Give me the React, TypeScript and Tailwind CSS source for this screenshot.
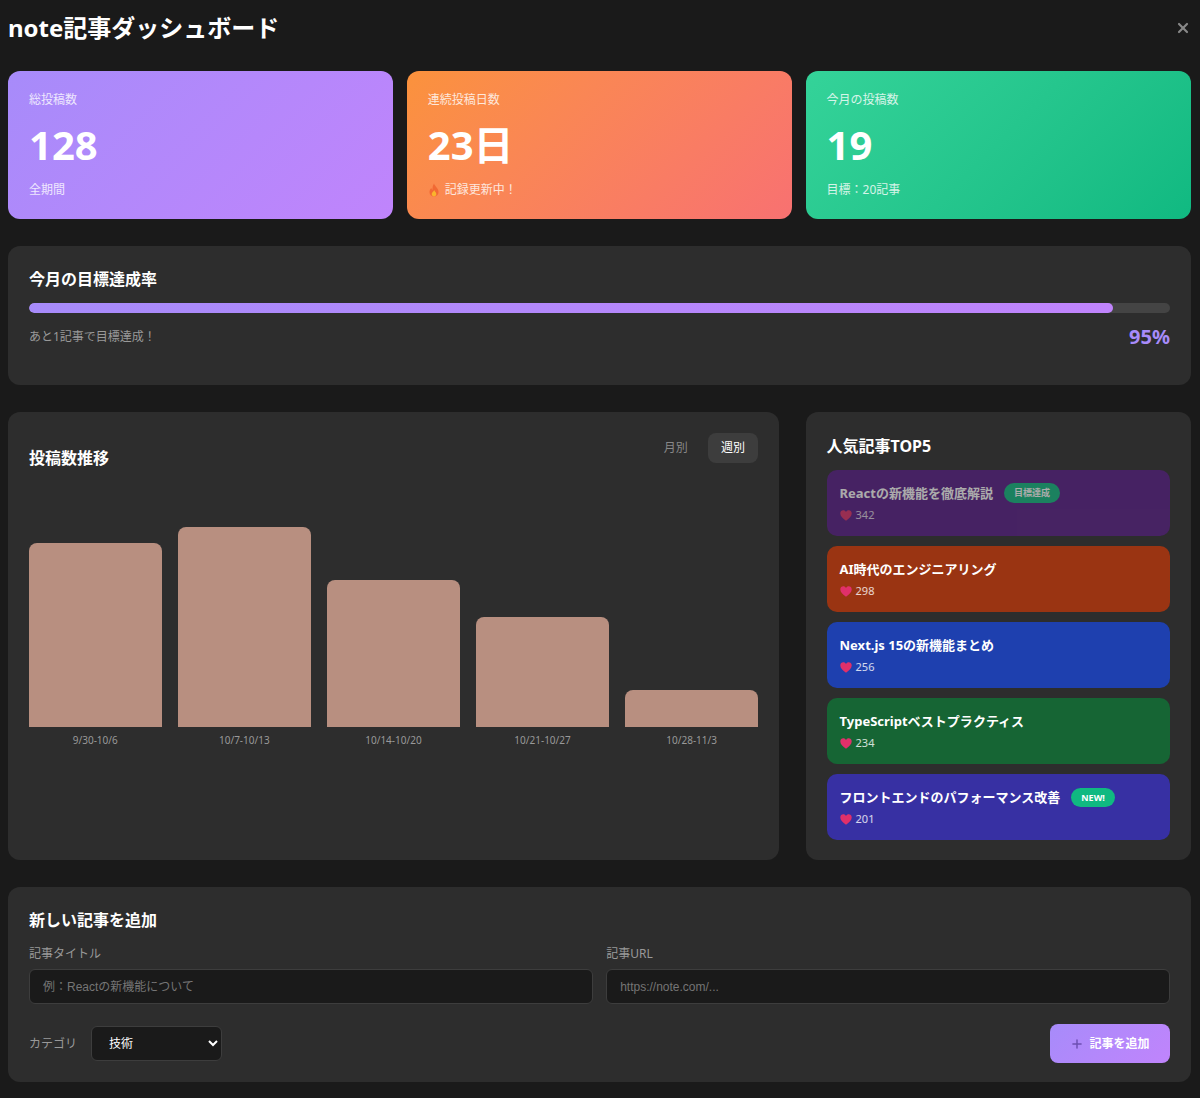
import React from "react";
import { X, Plus } from "lucide-react";

const Flame = () => (
  <svg width="12" height="14" viewBox="0 0 12 14" className="shrink-0">
    <path d="M6 0.5C6.5 3 10.5 5 10.5 9C10.5 11.8 8.5 13.5 6 13.5C3.5 13.5 1.5 11.8 1.5 9C1.5 7 2.6 5.8 3.3 5C3.5 6 4 6.6 4.6 6.8C4.4 4.5 4.8 2.2 6 0.5Z" fill="#f0622e" />
    <path d="M6.2 7C6.5 8.5 8.3 9.3 8.3 11C8.3 12.5 7.2 13.5 6 13.5C4.8 13.5 3.7 12.5 3.7 11C3.7 9.5 5.5 8.8 6.2 7Z" fill="#fbbf24" />
  </svg>
);

const Heart = () => (
  <svg width="12" height="11" viewBox="0 0 12 11" className="shrink-0">
    <path d="M6 10.8C2.8 8.4 0.3 6.3 0.3 3.5C0.3 1.5 1.7 0.3 3.3 0.3C4.4 0.3 5.4 0.9 6 2C6.6 0.9 7.6 0.3 8.7 0.3C10.3 0.3 11.7 1.5 11.7 3.5C11.7 6.3 9.2 8.4 6 10.8Z" fill="#e0306a" />
  </svg>
);

const bars = [
  { label: "9/30-10/6", h: "h-[184px]" },
  { label: "10/7-10/13", h: "h-[200px]" },
  { label: "10/14-10/20", h: "h-[147px]" },
  { label: "10/21-10/27", h: "h-[110px]" },
  { label: "10/28-11/3", h: "h-[37px]" },
];

const Stat = ({ cls, label, value, sub }: { cls: string; label: string; value: string; sub: React.ReactNode }) => (
  <div className={`rounded-xl p-[21px] text-white ${cls}`}>
    <div className="text-xs leading-4 opacity-80">{label}</div>
    <div className="my-[7px] text-[40px] font-bold leading-normal">{value}</div>
    <div className="flex items-center text-xs leading-4 opacity-80">{sub}</div>
  </div>
);

const Item = ({
  cls,
  title,
  likes,
  badge,
}: {
  cls: string;
  title: string;
  likes: number;
  badge?: React.ReactNode;
}) => (
  <div className={`rounded-[10px] px-[13px] py-[13px] ${cls}`}>
    <div className="flex items-center gap-[11px] text-[13px] font-bold leading-5 text-white">
      <span>{title}</span>
      {badge}
    </div>
    <div className="mt-[4px] flex items-center gap-[4px] text-[11px] leading-4 text-white/80">
      <Heart />
      <span>{likes}</span>
    </div>
  </div>
);

export default function App() {
  return (
    <div
      className="min-h-screen bg-[#1a1a1a] pl-2 pr-[9px] pt-[10px] text-white"
      style={{ fontFamily: '"Noto Sans", "Noto Sans CJK JP", sans-serif' }}
    >
      <div className="mb-[25px] flex h-9 items-center justify-between">
        <h1 className="text-2xl font-bold leading-9">note記事ダッシュボード</h1>
        <X size={16} strokeWidth={3.2} className="mr-0 text-[#888]" />
      </div>

      <div className="grid grid-cols-3 gap-[13.33px]">
        <Stat cls="bg-linear-135 from-[#a78bfa] to-[#c084fc]" label="総投稿数" value="128" sub="全期間" />
        <Stat
          cls="bg-linear-135 from-[#fb923c] to-[#f87171]"
          label="連続投稿日数"
          value="23日"
          sub={
            <span className="flex items-center gap-[5px]">
              <Flame />
              記録更新中！
            </span>
          }
        />
        <Stat cls="bg-linear-135 from-[#34d399] to-[#10b981]" label="今月の投稿数" value="19" sub="目標：20記事" />
      </div>

      <section className="mt-[27px] h-[139px] rounded-xl bg-[#2d2d2d] px-[21px] pt-[21px]">
        <h2 className="text-base font-bold leading-6">今月の目標達成率</h2>
        <div className="mt-[12px] h-[10px] overflow-hidden rounded-full bg-[#444]">
          <div className="h-full w-[95%] rounded-full bg-linear-to-r from-[#a78bfa] to-[#c084fc]" />
        </div>
        <div className="mt-[8px] flex items-start justify-between">
          <span className="mt-[8px] text-xs leading-4 text-[#999]">あと1記事で目標達成！</span>
          <span className="text-xl font-bold leading-8 text-[#a78bfa]">95%</span>
        </div>
      </section>

      <div className="mt-[27px] grid grid-cols-[2fr_1fr] gap-[26.67px]">
        <section className="rounded-xl bg-[#2d2d2d] px-[21px] pt-[21px]">
          <div className="flex items-start justify-between">
            <h2 className="mt-[13px] text-base font-bold leading-6">投稿数推移</h2>
            <div className="flex items-center gap-[7px] text-xs">
              <span className="px-[13px] leading-[30px] text-[#888]">月別</span>
              <span className="rounded-lg bg-[#3d3d3d] px-[13px] leading-[30px] text-white">週別</span>
            </div>
          </div>
          <div className="mt-[57px] grid h-[200px] grid-cols-5 items-end gap-[16.6px]">
            {bars.map((b) => (
              <div key={b.label} className={`rounded-t-lg bg-[#b88f80] ${b.h}`} />
            ))}
          </div>
          <div className="mt-[6px] grid grid-cols-5 gap-[16.6px]">
            {bars.map((b) => (
              <div key={b.label} className="text-center text-[10px] leading-[14px] text-[#999]">
                {b.label}
              </div>
            ))}
          </div>
        </section>

        <section className="rounded-xl bg-[#2d2d2d] px-[21px] pb-[20px] pt-[22px]">
          <h2 className="text-base font-bold leading-6">人気記事TOP5</h2>
          <div className="mt-[12px] flex flex-col gap-[10px]">
            <Item
              cls="bg-[#581c87] opacity-60"
              title="Reactの新機能を徹底解説"
              likes={342}
              badge={
                <span className="rounded-full bg-[#10b981] px-[10px] text-[9px] font-bold leading-5 text-white">目標達成</span>
              }
            />
            <Item cls="bg-[#9a3412]" title="AI時代のエンジニアリング" likes={298} />
            <Item cls="bg-[#1e40af]" title="Next.js 15の新機能まとめ" likes={256} />
            <Item cls="bg-[#166534]" title="TypeScriptベストプラクティス" likes={234} />
            <Item
              cls="bg-[#3730a3]"
              title="フロントエンドのパフォーマンス改善"
              likes={201}
              badge={
                <span className="rounded-full bg-[#10b981] px-[10px] text-[9px] font-bold leading-[19px] text-white">NEW!</span>
              }
            />
          </div>
        </section>
      </div>

      <section className="mt-[27px] h-[195px] rounded-xl bg-[#2d2d2d] px-[21px] pt-[21px]">
        <h2 className="text-base font-bold leading-6">新しい記事を追加</h2>
        <div className="mt-[14px] grid grid-cols-2 gap-[13.33px]">
          <label className="block">
            <span className="block text-xs leading-4 text-[#999]">記事タイトル</span>
            <input
              placeholder="例：Reactの新機能について"
              className="mt-[7px] block h-[35px] w-full rounded-md border border-[#3d3d3d] bg-[#1a1a1a] px-[13px] text-xs text-white outline-none placeholder:text-[#757575]"
              style={{ fontFamily: '"Liberation Sans", "Noto Sans CJK JP", sans-serif' }}
            />
          </label>
          <label className="block">
            <span className="block text-xs leading-4 text-[#999]">記事URL</span>
            <input
              placeholder="https://note.com/..."
              className="mt-[7px] block h-[35px] w-full rounded-md border border-[#3d3d3d] bg-[#1a1a1a] px-[13px] text-xs text-white outline-none placeholder:text-[#757575]"
              style={{ fontFamily: '"Liberation Sans", "Noto Sans CJK JP", sans-serif' }}
            />
          </label>
        </div>
        <div className="mt-[20px] flex items-center justify-between">
          <div className="flex items-center gap-[14px]">
            <span className="text-xs text-[#999]">カテゴリ</span>
            <select
              defaultValue="技術"
              className="h-[35px] w-[131px] rounded-md border border-[#3d3d3d] bg-[#1a1a1a] pl-[13px] pr-[4px] text-xs text-white outline-none"
            >
              <option>技術</option>
            </select>
          </div>
          <button className="flex h-[39px] w-[120px] items-center justify-center gap-[5px] rounded-lg bg-linear-135 from-[#a78bfa] to-[#c084fc] text-xs font-bold text-white">
            <Plus size={14} strokeWidth={2.5} className="text-[#6d4fb3]" />
            記事を追加
          </button>
        </div>
      </section>
    </div>
  );
}
